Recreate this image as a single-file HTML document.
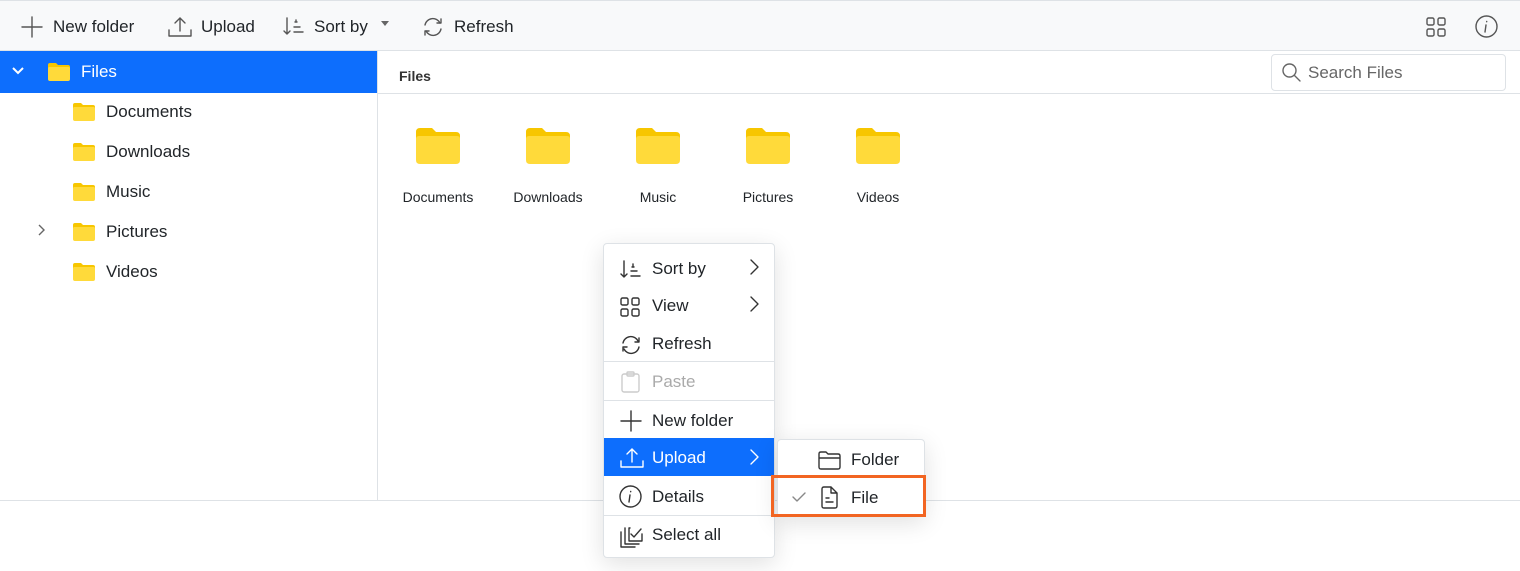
<!DOCTYPE html>
<html><head><meta charset="utf-8"><style>
*{box-sizing:border-box;margin:0;padding:0}
body{width:1520px;height:571px;position:relative;background:#fff;font-family:"Liberation Sans",sans-serif;color:#212529;overflow:hidden;font-size:17px}
.a{position:absolute}
.t{position:absolute;white-space:nowrap;line-height:20px}
svg{position:absolute;overflow:visible}
.ic{fill:none;stroke:#333;stroke-width:1.4;stroke-linecap:round;stroke-linejoin:round}
.tb{stroke:#555}
</style></head><body>
<svg width="0" height="0"><defs>
<g id="fold"><path d="M1 3Q1 1 3 1H9L11 3H21Q23 3 23 5V9H1Z" fill="#f7c600"/><path d="M1 6.5Q1 5 2.5 5H21.5Q23 5 23 6.5V17Q23 19 21 19H3Q1 19 1 17Z" fill="#ffda3a"/></g>
</defs></svg>
<!-- toolbar -->
<div class="a" style="left:0;top:0;width:1520px;height:51px;background:#f8f9fa;border-top:1px solid #dee2e6;border-bottom:1px solid #dee2e6"></div>
<svg class="ic tb" style="left:21px;top:16px" width="22" height="22"><path d="M11 1V21M1 11H21"/></svg>
<div class="t" style="left:53px;top:17px">New folder</div>
<svg class="ic tb" style="left:168px;top:16px" width="24" height="22"><path d="M12 2V15M7 7L12 2L17 7M1 14V20H23V14"/></svg>
<div class="t" style="left:201px;top:17px">Upload</div>
<svg class="ic tb" style="left:283px;top:17px" width="22" height="20"><path d="M4 1V17M1 14L4 17L7 14M12 5H14M11 10H17M11 15H20M13 3V5"/></svg>
<div class="t" style="left:314px;top:17px">Sort by</div>
<svg style="left:381px;top:21px" width="9" height="6"><path d="M0 0H8L4 5Z" fill="#666"/></svg>
<svg class="ic tb" style="left:422px;top:17px" width="22" height="20"><path d="M3 8A8 8 0 0 1 18 6M19 12A8 8 0 0 1 4 14"/><path d="M15 6H19V2M7 14H3V18" /></svg>
<div class="t" style="left:454px;top:17px">Refresh</div>
<svg class="ic tb" style="left:1426px;top:17px" width="22" height="22"><rect x="1" y="1" width="7" height="7" rx="1.5"/><rect x="12" y="1" width="7" height="7" rx="1.5"/><rect x="1" y="12" width="7" height="7" rx="1.5"/><rect x="12" y="12" width="7" height="7" rx="1.5"/></svg>
<svg class="ic tb" style="left:1475px;top:15px" width="24" height="24"><circle cx="11.5" cy="11.5" r="10.5"/><path d="M11 10L10 17M11.7 6.5V6.8"/></svg>
<!-- sidebar -->
<div class="a" style="left:377px;top:51px;width:1px;height:449px;background:#dee2e6"></div>
<div class="a" style="left:0;top:500px;width:1520px;height:1px;background:#dee2e6"></div>
<div class="a" style="left:0;top:51px;width:377px;height:42px;background:#0d6efd"></div>
<svg style="left:12px;top:67px" width="14" height="10"><path d="M1 1L6 6L11 1" stroke="#fff" stroke-width="2" fill="none"/></svg>
<svg style="left:47px;top:62px" width="24" height="20"><use href="#fold"/></svg>
<div class="t" style="left:81px;top:62px;color:#fff">Files</div>
<svg style="left:72px;top:102px" width="24" height="20"><use href="#fold"/></svg><div class="t" style="left:106px;top:102px">Documents</div>
<svg style="left:72px;top:142px" width="24" height="20"><use href="#fold"/></svg><div class="t" style="left:106px;top:142px">Downloads</div>
<svg style="left:72px;top:182px" width="24" height="20"><use href="#fold"/></svg><div class="t" style="left:106px;top:182px">Music</div>
<svg style="left:38px;top:224px" width="10" height="14"><path d="M1 1L6 6L1 11" stroke="#666" stroke-width="1.4" fill="none"/></svg>
<svg style="left:72px;top:222px" width="24" height="20"><use href="#fold"/></svg><div class="t" style="left:106px;top:222px">Pictures</div>
<svg style="left:72px;top:262px" width="24" height="20"><use href="#fold"/></svg><div class="t" style="left:106px;top:262px">Videos</div>
<!-- content -->
<div class="t" style="left:399px;top:66px;font-size:14px;font-weight:bold;color:#333">Files</div>
<div class="a" style="left:378px;top:93px;width:1142px;height:1px;background:#dee2e6"></div>
<div class="a" style="left:1271px;top:54px;width:235px;height:37px;border:1px solid #dee2e6;border-radius:4px"></div>
<svg class="ic" style="left:1282px;top:63px;stroke:#666" width="20" height="20"><circle cx="7.5" cy="7.5" r="6.5"/><path d="M12.5 12.5L18 18"/></svg>
<div class="t" style="left:1308px;top:63px;color:#666">Search Files</div>
<svg style="left:414px;top:126px" width="48" height="40" viewBox="0 0 24 20"><use href="#fold"/></svg>
<svg style="left:524px;top:126px" width="48" height="40" viewBox="0 0 24 20"><use href="#fold"/></svg>
<svg style="left:634px;top:126px" width="48" height="40" viewBox="0 0 24 20"><use href="#fold"/></svg>
<svg style="left:744px;top:126px" width="48" height="40" viewBox="0 0 24 20"><use href="#fold"/></svg>
<svg style="left:854px;top:126px" width="48" height="40" viewBox="0 0 24 20"><use href="#fold"/></svg>
<div class="t" style="left:383px;width:110px;text-align:center;top:187px;font-size:14px">Documents</div>
<div class="t" style="left:493px;width:110px;text-align:center;top:187px;font-size:14px">Downloads</div>
<div class="t" style="left:603px;width:110px;text-align:center;top:187px;font-size:14px">Music</div>
<div class="t" style="left:713px;width:110px;text-align:center;top:187px;font-size:14px">Pictures</div>
<div class="t" style="left:823px;width:110px;text-align:center;top:187px;font-size:14px">Videos</div>
<!-- context menu -->
<div class="a" style="left:603px;top:243px;width:172px;height:315px;background:#fff;border:1px solid #dee2e6;border-radius:4px;box-shadow:0 6px 24px rgba(0,0,0,.12)"></div>
<div class="a" style="left:604px;top:361px;width:170px;height:1px;background:#dee2e6"></div>
<div class="a" style="left:604px;top:400px;width:170px;height:1px;background:#dee2e6"></div>
<div class="a" style="left:604px;top:515px;width:170px;height:1px;background:#dee2e6"></div>
<div class="a" style="left:604px;top:438px;width:170px;height:38px;background:#0d6efd"></div>
<svg class="ic" style="left:620px;top:259px" width="22" height="20"><path d="M4 2V18M1 15L4 18L7 15M12 8H14M11 12H17M11 17H20M13 5V8"/></svg>
<div class="t" style="left:652px;top:259px">Sort by</div>
<svg class="ic" style="left:750px;top:259px" width="10" height="16"><path d="M1 1L8 8L1 15"/></svg>
<svg class="ic" style="left:620px;top:297px" width="22" height="22"><rect x="1" y="1" width="7" height="7" rx="1.5"/><rect x="12" y="1" width="7" height="7" rx="1.5"/><rect x="1" y="12" width="7" height="7" rx="1.5"/><rect x="12" y="12" width="7" height="7" rx="1.5"/></svg>
<div class="t" style="left:652px;top:296px">View</div>
<svg class="ic" style="left:750px;top:296px" width="10" height="16"><path d="M1 1L8 8L1 15"/></svg>
<svg class="ic" style="left:620px;top:334px" width="22" height="22"><path d="M3 9A8 8 0 0 1 18 7M19 13A8 8 0 0 1 4 15"/><path d="M15 8H19V4M7 13H3V17"/></svg>
<div class="t" style="left:652px;top:334px">Refresh</div>
<svg class="ic" style="left:621px;top:371px;stroke:#ccc" width="20" height="22"><rect x="1" y="3" width="17" height="18" rx="2"/><rect x="6" y="1" width="7" height="4" rx="1"/></svg>
<div class="t" style="left:652px;top:372px;color:#aaa">Paste</div>
<svg class="ic" style="left:620px;top:410px" width="22" height="22"><path d="M11 1V21M1 11H21"/></svg>
<div class="t" style="left:652px;top:411px">New folder</div>
<svg class="ic" style="left:620px;top:447px;stroke:#fff" width="24" height="22"><path d="M12 2V15M7 7L12 2L17 7M1 14V20H23V14"/></svg>
<div class="t" style="left:652px;top:448px;color:#fff">Upload</div>
<svg class="ic" style="left:750px;top:449px;stroke:#fff" width="10" height="16"><path d="M1 1L8 8L1 15"/></svg>
<svg class="ic" style="left:619px;top:485px" width="24" height="24"><circle cx="11.5" cy="11.5" r="10.5"/><path d="M11 10L10 17M11.7 6.5V6.8"/></svg>
<div class="t" style="left:652px;top:487px">Details</div>
<svg class="ic" style="left:620px;top:524px" width="22" height="24"><path d="M5 4V20H19M1 8V23H15M10 4H9V17H22V10M11 10L14 13L21 5"/></svg>
<div class="t" style="left:652px;top:525px">Select all</div>
<!-- submenu -->
<div class="a" style="left:777px;top:439px;width:148px;height:78px;background:#fff;border:1px solid #dee2e6;border-radius:4px;box-shadow:0 6px 24px rgba(0,0,0,.12)"></div>
<svg class="ic" style="left:818px;top:450px" width="24" height="20"><path d="M1 4Q1 2 3 2H8L10 4H20Q22 4 22 6V17Q22 19 20 19H3Q1 19 1 17Z M1 8H22"/></svg>
<div class="t" style="left:851px;top:450px">Folder</div>
<div class="a" style="left:771px;top:475px;width:155px;height:42px;border:3px solid #f26522"></div>
<svg class="ic" style="left:792px;top:492px;stroke:#888" width="14" height="10"><path d="M1 5L5 9L13 1"/></svg>
<svg class="ic" style="left:820px;top:486px" width="20" height="24"><path d="M2 3Q2 1 4 1H11L17 7V20Q17 22 15 22H4Q2 22 2 20Z M11 1V7H17M6 16H13M6 12H9"/></svg>
<div class="t" style="left:851px;top:488px">File</div>
</body></html>
